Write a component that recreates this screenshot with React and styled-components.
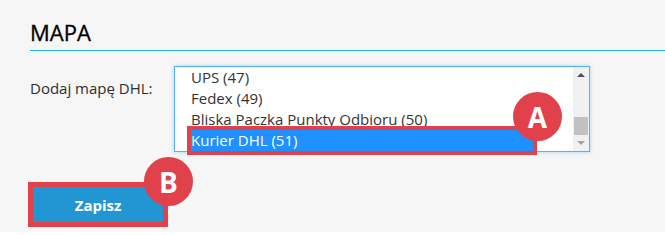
import React from "react";
import styled, { createGlobalStyle } from "styled-components";

const GlobalStyle = createGlobalStyle`
  html, body { margin: 0; padding: 0; background: #ffffff; }
  body { font-family: "Open Sans", "Liberation Sans", sans-serif; }
  * { box-sizing: border-box; }
`;

const RED = "#e1414b";

const Page = styled.div`
  background: #f6f6f6;
  height: 232px;
  padding-top: 19px;
  overflow: hidden;
`;

const SectionTitle = styled.h2`
  margin: 0 0 0 30px;
  font-size: 22px;
  line-height: 26px;
  font-weight: 400;
  color: #000;
  -webkit-text-stroke: 0.3px #000;
  padding-bottom: 5px;
  border-bottom: 1px solid #27b2f2;
`;

const FormRow = styled.div`
  display: flex;
  margin: 15px 0 0 30px;
`;

const Label = styled.label`
  width: 144px;
  padding-top: 12px;
  font-size: 15px;
  line-height: 20px;
  color: #2e2e2e;
`;

const ListBox = styled.div`
  width: 416px;
  height: 86px;
  display: flex;
  background: #fff;
  border: 1px solid #55b4f0;
  box-shadow: 0 0 4px rgba(85, 180, 240, 0.55);
`;

const OptionList = styled.div`
  flex: 1;
  display: flex;
  flex-direction: column;
  padding-left: 16px;
`;

const Option = styled.div`
  position: relative;
  width: 342px;
  height: 21px;
  line-height: 21px;
  font-size: 15px;
  white-space: nowrap;
  color: ${(p) => (p.$selected ? "#fff" : "#333")};
  background: ${(p) => (p.$selected ? "#1e90ff" : "transparent")};
  outline: ${(p) => (p.$selected ? `4px solid ${RED}` : "none")};
`;

const Badge = styled.span`
  position: absolute;
  top: ${(p) => p.$top}px;
  right: ${(p) => p.$right}px;
  width: 49px;
  height: 49px;
  border-radius: 50%;
  background: ${RED};
  color: #fff;
  display: flex;
  align-items: center;
  justify-content: center;
  font-family: "Open Sans", "Liberation Sans", sans-serif;
  font-weight: 700;
  font-size: 28px;
  line-height: 1;
`;

const Scrollbar = styled.div`
  width: 16px;
  display: flex;
  flex-direction: column;
  background: #f1f1f1;
`;

const Arrow = styled.div`
  height: 17px;
  display: flex;
  align-items: center;
  justify-content: center;
  &::after {
    content: "";
    width: 0;
    height: 0;
    border-left: 4px solid transparent;
    border-right: 4px solid transparent;
    ${(p) =>
      p.$dir === "up"
        ? `border-bottom: 4px solid ${p.$active ? "#505050" : "#a3a3a3"};`
        : `border-top: 4px solid ${p.$active ? "#505050" : "#a3a3a3"};`}
  }
`;

const Track = styled.div`
  flex: 1;
  padding: 0 1px;
`;

const Thumb = styled.div`
  height: 18px;
  background: #c1c1c1;
`;

const SaveButton = styled.button`
  position: relative;
  display: block;
  margin: 35px 0 0 33px;
  width: 130px;
  height: 35px;
  border: none;
  background: #2196d2;
  color: #fff;
  font-family: "Open Sans", "Liberation Sans", sans-serif;
  font-weight: 700;
  font-size: 15px;
  outline: 5px solid ${RED};
  padding: 0;
`;

const options = [
  { label: "UPS (47)" },
  { label: "Fedex (49)" },
  { label: "Bliska Paczka Punkty Odbioru (50)" },
  { label: "Kurier DHL (51)", selected: true, badge: "A" },
];

export default function App() {
  return (
    <>
      <GlobalStyle />
      <Page>
        <SectionTitle>MAPA</SectionTitle>
        <FormRow>
          <Label>Dodaj mapę DHL:</Label>
          <ListBox>
            <OptionList>
              {options.map((o) => (
                <Option key={o.label} $selected={o.selected}>
                  {o.label}
                  {o.badge && (
                    <Badge $top={-38} $right={-29}>
                      {o.badge}
                    </Badge>
                  )}
                </Option>
              ))}
            </OptionList>
            <Scrollbar>
              <Arrow $dir="up" $active />
              <Track>
                <Thumb style={{ marginTop: 33 }} />
              </Track>
              <Arrow $dir="down" />
            </Scrollbar>
          </ListBox>
        </FormRow>
        <SaveButton>
          Zapisz
          <Badge $top={-30} $right={-30}>
            B
          </Badge>
        </SaveButton>
      </Page>
    </>
  );
}
